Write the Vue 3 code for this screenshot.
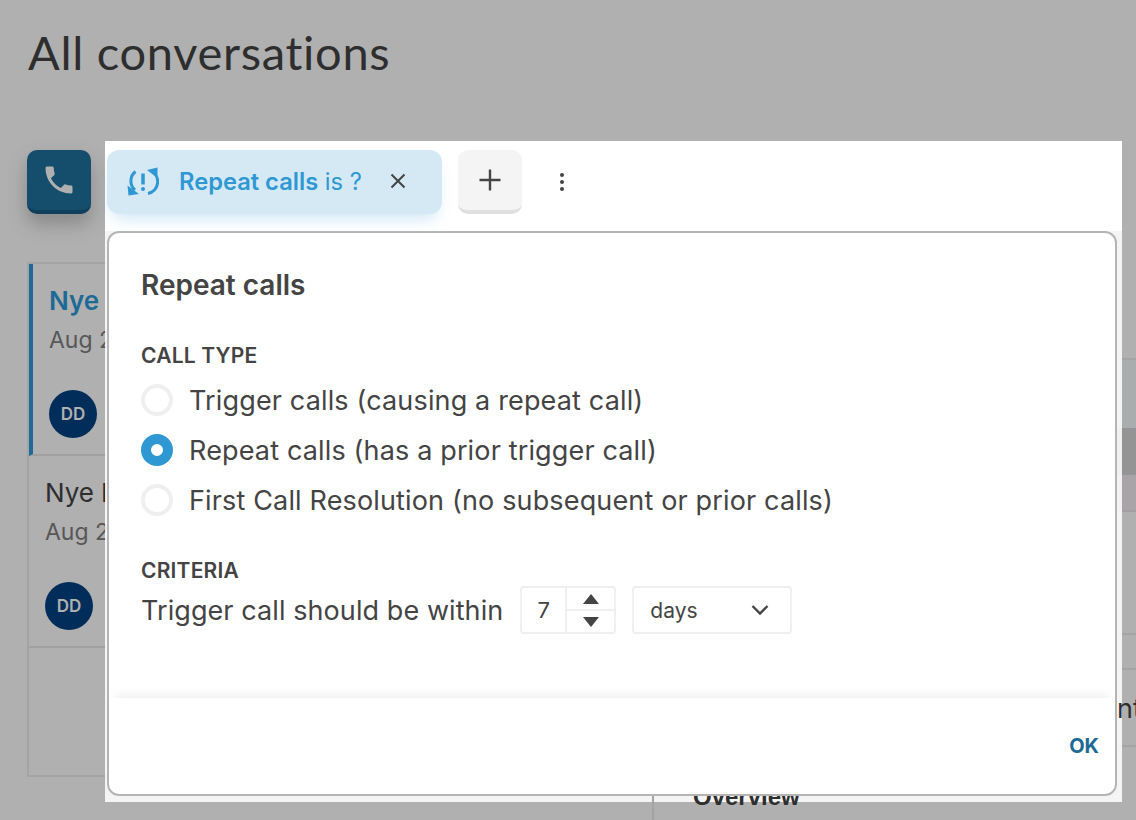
<script setup>
import { ref } from 'vue'

const callType = ref('repeat')
const days = ref(7)

const options = [
  { id: 'trigger', label: 'Trigger calls (causing a repeat call)' },
  { id: 'repeat', label: 'Repeat calls (has a prior trigger call)' },
  { id: 'first', label: 'First Call Resolution (no subsequent or prior calls)' },
]

const conversations = [
  { id: 1, name: 'Nye', date: 'Aug 2', active: true },
  { id: 2, name: 'Nye l', date: 'Aug 2', active: false },
]
</script>

<template>
  <div class="page">
    <h1 class="title">All conversations</h1>
    <button class="phone-btn" type="button">
      <svg width="36" height="36" viewBox="0 0 24 24" fill="#b0b0b0">
        <path d="M6.6 10.8c1.4 2.8 3.8 5.100 6.600 6.600l2.200-2.200c.3-.3.7-.4 1-.2 1.100.4 2.300.6 3.600.6.6 0 1 .4 1 1V20c0 .6-.4 1-1 1C10.600 21 3 13.400 3 4c0-.6.4-1 1-1h3.500c.6 0 1 .4 1 1 0 1.200.2 2.400.6 3.600.1.3 0 .7-.2 1l-2.300 2.200z" />
      </svg>
    </button>
    <div class="list">
      <div v-for="c in conversations" :key="c.id" class="conv" :class="{ active: c.active }">
        <div class="conv-name">{{ c.name }}</div>
        <div class="conv-date">{{ c.date }}</div>
        <div class="avatar">DD</div>
      </div>
    </div>

    <div class="side">
      <div class="side-row r1"></div>
      <div class="side-row r2"></div>
      <div class="side-row r3"></div>
      <div class="side-row r4"></div>
      <div class="side-row r5"></div>
      <div class="side-row r6"></div>
      <div class="side-row r7"></div>
    </div>

    <div class="panel">
      <div class="bar">
        <div class="chip">
          <svg class="chip-icon" width="32" height="32" viewBox="0 0 32 32" fill="none" stroke="#2f98d3" stroke-width="3">
            <path d="M8.500 5.500A12 12 0 0 0 8 24" />
            <path d="M0.500 19.500l1 10 10.500-1.500z" fill="#2f98d3" stroke="none" />
            <path d="M24 5A12 12 0 0 1 21 27.500" />
            <path d="M20 4l10.500-2.500 0 10.500z" fill="#2f98d3" stroke="none" />
            <path d="M16 7.500v11" stroke-width="3.500" />
            <circle cx="16" cy="23" r="2" fill="#2f98d3" stroke="none" />
          </svg>
          <span class="chip-text"><b>Repeat calls</b> is ?</span>
          <svg class="chip-x" width="18" height="18" viewBox="0 0 18 18" stroke="#444" stroke-width="2" fill="none">
            <path d="M2.500 2.500l13 13M15.500 2.500l-13 13" />
          </svg>
        </div>
        <button class="add-btn" type="button">
          <svg width="22" height="22" viewBox="0 0 22 22" stroke="#444" stroke-width="2.400" fill="none">
            <path d="M11 0.500v21M0.500 11h21" />
          </svg>
        </button>
        <button class="more-btn" type="button">
          <svg width="6" height="20" viewBox="0 0 6 20" fill="#444">
            <circle cx="3" cy="3" r="2" />
            <circle cx="3" cy="10" r="2" />
            <circle cx="3" cy="17" r="2" />
          </svg>
        </button>
      </div>

      <div class="card">
        <div class="card-body">
          <h2 class="card-title">Repeat calls</h2>
          <div class="label">CALL TYPE</div>
          <label v-for="o in options" :key="o.id" class="radio-row" @click="callType = o.id">
            <span class="radio" :class="{ on: callType === o.id }"></span>
            <span>{{ o.label }}</span>
          </label>
          <div class="label criteria">CRITERIA</div>
          <div class="criteria-row">
            <span>Trigger call should be within</span>
            <div class="stepper">
              <span class="step-val">{{ days }}</span>
              <div class="step-btns">
                <button type="button" class="step-btn" @click="days++"><i class="tri up"></i></button>
                <button type="button" class="step-btn" @click="days--"><i class="tri down"></i></button>
              </div>
            </div>
            <div class="select">
              <span>days</span>
              <svg width="20" height="12" viewBox="0 0 20 12" fill="none" stroke="#444" stroke-width="2.400">
                <path d="M2.500 2l7.500 7.500L17.500 2" />
              </svg>
            </div>
          </div>
        </div>
        <div class="card-foot">
          <button class="ok" type="button">OK</button>
        </div>
      </div>
    </div>

    <!-- these show through the edge of the translucent panel -->
    <div class="side-text">nt</div>
    <div class="detail">
      <div class="overview">Overview</div>
    </div>
  </div>
</template>

<style>
html, body { margin: 0; background: #b0b0b0; }
</style>

<style scoped>
.page {
  position: relative;
  width: 1136px;
  height: 820px;
  overflow: hidden;
  background: #b0b0b0;
  font-family: Inter, "Liberation Sans", sans-serif;
  color: #444;
}

.title {
  margin: 0;
  padding: 24px 0 0 28px;
  font-family: Lato, "Liberation Sans", sans-serif;
  font-size: 47px;
  line-height: 56px;
  font-weight: 400;
  letter-spacing: 0.7px;
  font-variant-ligatures: none;
  color: #2e2e2e;
}

.phone-btn {
  display: flex;
  align-items: center;
  justify-content: center;
  margin: 70px 0 0 27px;
  padding: 0;
  width: 64px;
  height: 64px;
  border: 0;
  border-bottom: 4px solid #0f3f5c;
  border-radius: 10px;
  background: #154d6d;
  box-shadow: 0 10px 18px rgba(90, 90, 90, 0.45);
}

.list {
  margin: 48px 0 0 27px;
  width: 300px;
  height: 515px;
  border: 2px solid #a4a4a4;
  border-right: 0;
  box-sizing: border-box;
}

.conv {
  height: 192px;
  padding: 17px 16px;
  box-sizing: border-box;
  border-bottom: 2px solid #a0a0a0;
}
.conv.active { border-left: 4px solid #1d6a96; padding-left: 16px; }

.conv-name {
  margin-bottom: 5px;
  font-size: 26px;
  line-height: 39px;
  color: #2e2e2e;
}
.conv.active .conv-name { color: #1d6a96; font-weight: 600; }

.conv-date {
  font-size: 23px;
  line-height: 30px;
  color: #575757;
}

.avatar {
  margin-top: 35px;
  width: 48px;
  height: 48px;
  border-radius: 50%;
  background: #002d5a;
  color: #b0b0b0;
  font-size: 17px;
  font-weight: 600;
  display: flex;
  align-items: center;
  justify-content: center;
}

.side {
  position: absolute;
  top: 358px;
  left: 1100px;
  right: 0;
}
.side-row { border-top: 2px solid #a4a4a4; box-sizing: border-box; }
.r1 { height: 70px; background: #a9adad; }
.r2 { height: 47px; background: #949494; border: 0; }
.r3 { height: 37px; background: #a9a4a8; border: 0; border-bottom: 2px solid #a0a0a0; }
.r4 { height: 121px; border: 0; }
.r5 { height: 35px; }
.r6 { height: 77px; }
.r7 { height: 75px; }

.side-text {
  position: absolute;
  z-index: 2;
  top: 691px;
  left: 1117px;
  font-size: 27px;
  line-height: 36px;
  color: #2e2e2e;
}

.detail {
  position: absolute;
  z-index: 2;
  top: 780px;
  left: 652px;
  bottom: 0;
  right: 0;
  border-left: 2px solid #a4a4a4;
}
.overview {
  padding: 3px 0 0 39px;
  font-family: "Liberation Sans", sans-serif;
  font-weight: 700;
  font-size: 24px;
  line-height: 28px;
  color: #2e2e2e;
}

/* the open filter popover sits over the dimmed page */
.panel {
  position: absolute;
  top: 141px;
  left: 105px;
  width: 1017px;
  height: 661px;
  background: rgba(255, 255, 255, 0.86);
  box-sizing: border-box;
  padding: 0 5px 6px 2px;
  display: flex;
  flex-direction: column;
}

.bar {
  position: relative;
  z-index: 3;
  display: flex;
  align-items: flex-start;
  height: 90px;
  box-sizing: border-box;
  padding-top: 9px;
  margin: 0 -5px 0 -2px;
  padding-left: 2px;
  background: #fff;
}

.chip {
  display: flex;
  align-items: center;
  width: 335px;
  height: 64px;
  box-sizing: border-box;
  padding: 0 0 0 20px;
  border-radius: 12px;
  background: #d5e9f5;
  box-shadow: 0 10px 16px -6px rgba(47, 152, 211, 0.25);
}
.chip-icon { flex: none; }
.chip-text {
  margin: 0 0 2px 20px;
  font-size: 23.700px;
  color: #2f98d3;
  white-space: nowrap;
}
.chip-text b { font-weight: 600; }
.chip-x { margin: 0 0 2px 27px; flex: none; }

.add-btn {
  display: flex;
  align-items: center;
  justify-content: center;
  margin-left: 16px;
  width: 64px;
  height: 64px;
  border: 0;
  border-bottom: 4px solid #e0e0e0;
  border-radius: 10px;
  background: #f4f4f4;
  padding: 0;
}

.more-btn {
  margin-left: 30px;
  width: 20px;
  height: 64px;
  padding: 0;
  border: 0;
  background: none;
  display: flex;
  align-items: center;
  justify-content: center;
}

.card {
  position: relative;
  z-index: 3;
  flex: 1;
  display: flex;
  flex-direction: column;
  border: 2px solid #b5b5b5;
  border-radius: 12px;
  background: #fff;
}

.card-body {
  flex: 1;
  padding: 34px 32px 0;
}

.card-title {
  margin: 0 0 39px;
  font-size: 28px;
  line-height: 36px;
  font-weight: 600;
  color: #444;
}

.label {
  margin-bottom: 5px;
  font-size: 21px;
  line-height: 28px;
  font-weight: 600;
  letter-spacing: 0.2px;
  color: #444;
}
.label.criteria { margin-top: 32px; margin-bottom: 1px; }

.radio-row {
  display: flex;
  align-items: center;
  gap: 16px;
  height: 50px;
  font-size: 27px;
  letter-spacing: 0.15px;
  color: #444;
  white-space: nowrap;
}
.radio {
  flex: none;
  width: 32px;
  height: 32px;
  box-sizing: border-box;
  border: 4px solid #efefef;
  border-radius: 50%;
  background: #fff;
}
.radio.on {
  border: 10px solid #2f98d3;
}

.criteria-row {
  display: flex;
  align-items: center;
  height: 48px;
  font-size: 27px;
  letter-spacing: 0.08px;
  white-space: nowrap;
}

.stepper {
  display: flex;
  margin-left: 17px;
  width: 96px;
  height: 48px;
  box-sizing: border-box;
  border: 2px solid #efefef;
  border-radius: 4px;
}
.step-val {
  flex: 1;
  text-align: center;
  font-size: 22px;
  line-height: 44px;
  border-right: 2px solid #efefef;
}
.step-btns { width: 47px; display: flex; flex-direction: column; }
.step-btn {
  flex: 1;
  border: 0;
  padding: 0;
  background: none;
  display: flex;
  align-items: center;
  justify-content: center;
}
.step-btn + .step-btn { border-top: 2px solid #efefef; }
.tri {
  width: 0;
  height: 0;
  border-left: 8px solid transparent;
  border-right: 8px solid transparent;
}
.tri.up { border-bottom: 10px solid #444; }
.tri.down { border-top: 10px solid #444; }

.select {
  display: flex;
  align-items: center;
  justify-content: space-between;
  margin-left: 16px;
  width: 160px;
  height: 48px;
  box-sizing: border-box;
  padding: 0 20px 0 16px;
  border: 2px solid #efefef;
  border-radius: 4px;
  font-size: 21px;
  letter-spacing: 0;
}

.card-foot {
  display: flex;
  align-items: center;
  justify-content: flex-end;
  height: 96px;
  padding: 0 16px;
  box-shadow: 0 -8px 12px -6px rgba(0, 0, 0, 0.08);
  border-radius: 0 0 10px 10px;
}

.ok {
  border: 0;
  padding: 0;
  background: none;
  font-family: Inter, "Liberation Sans", sans-serif;
  font-size: 20px;
  font-weight: 700;
  color: #1d6a96;
}
</style>
